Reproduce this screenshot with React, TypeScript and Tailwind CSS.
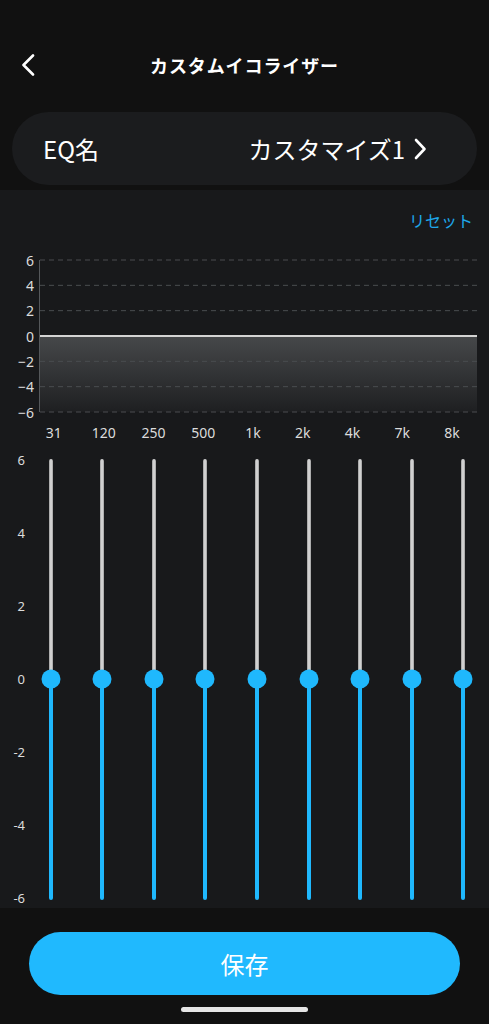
import React from 'react';

const FREQS = ['31', '120', '250', '500', '1k', '2k', '4k', '7k', '8k'];
const CHART_TICKS = [6, 4, 2, 0, -2, -4, -6];
const SLIDER_TICKS = ['6', '4', '2', '0', '-2', '-4', '-6'];

// y position of a gain value inside the preview chart (25.33px per 2dB)
const chartY = (v: number) => 10 + (6 - v) * 12.667;

function PreviewChart() {
  return (
    <svg width="489" height="175" viewBox="0 0 489 175" className="block">
      <defs>
        <linearGradient id="fill" x1="0" y1="0" x2="0" y2="1">
          <stop offset="0" stopColor="#46484a" />
          <stop offset="1" stopColor="#1e1f21" />
        </linearGradient>
      </defs>
      <rect x="40" y={chartY(0)} width="437" height={chartY(-6) - chartY(0)} fill="url(#fill)" />
      {CHART_TICKS.filter((t) => t !== 0).map((t) => (
        <line
          key={t}
          x1="40"
          x2="477"
          y1={chartY(t)}
          y2={chartY(t)}
          stroke="#4a4d50"
          strokeWidth="1"
          strokeDasharray="5 4"
        />
      ))}
      <line x1="39.5" x2="39.5" y1={chartY(6)} y2={chartY(-6)} stroke="#55585b" strokeWidth="1" />
      <line x1="40" x2="477" y1={chartY(0)} y2={chartY(0)} stroke="#d4d4d4" strokeWidth="2.2" />
      {CHART_TICKS.map((t) => (
        <text
          key={t}
          x="34"
          y={chartY(t)}
          textAnchor="end"
          dominantBaseline="central"
          fontSize="14"
          fill="#dcdcdc"
          fontFamily='"Noto Sans", sans-serif'
        >
          {t < 0 ? `\u2212${-t}` : t}
        </text>
      ))}
    </svg>
  );
}

function Slider() {
  return (
    <div className="flex justify-center">
      <div className="relative mt-[8px] flex h-[441px] w-[4px] flex-col">
        <div className="h-[220px] rounded-t-full bg-gradient-to-r from-[#9c9c9c] via-[#e2e2e2] to-[#9c9c9c]" />
        <div className="flex-1 rounded-b-full bg-[#1fb8fd]" />
        <div className="absolute left-1/2 top-[220px] h-[19px] w-[19px] -translate-x-1/2 -translate-y-1/2 rounded-full bg-[#1fb8fd]" />
      </div>
    </div>
  );
}

export default function App() {
  return (
    <div
      className="flex h-[1024px] w-[489px] flex-col bg-[#111111] text-white"
      style={{ fontFamily: '"Noto Sans CJK JP", "Noto Sans", sans-serif' }}
    >
      {/* Nav bar */}
      <div className="relative mt-[43px] flex h-[44px] items-center justify-center">
        <svg className="absolute left-[18px] top-[11px]" width="22" height="22" viewBox="0 0 22 22">
          <polyline points="15,1.5 5.5,11 15,20.5" fill="none" stroke="#ffffff" strokeWidth="2.6" strokeLinecap="round" strokeLinejoin="round" />
        </svg>
        <h1 className="text-[18px] font-bold tracking-[0.05em]">カスタムイコライザー</h1>
      </div>

      {/* EQ name */}
      <div className="mx-[12px] mt-[25px] flex h-[73px] items-center justify-between rounded-full bg-[#1b1c1e] pl-[31px] pr-[50px]">
        <span className="text-[24px] leading-none">EQ名</span>
        <div className="flex items-center gap-[8px]">
          <span className="text-[24px] leading-none">カスタマイズ1</span>
          <svg width="14" height="22" viewBox="0 0 14 22">
            <polyline points="3,2 11.5,11 3,20" fill="none" stroke="#ffffff" strokeWidth="2.6" strokeLinecap="round" strokeLinejoin="round" />
          </svg>
        </div>
      </div>

      {/* EQ panel */}
      <div className="mt-[5px] flex flex-col bg-[#18191b] pb-[1px]">
        <div className="flex h-[60px] items-center justify-end pr-[16px]">
          <span className="text-[16px] text-[#1ea8ea]">リセット</span>
        </div>

        <PreviewChart />

        <div className="ml-[29px] mr-[12px] -mt-[2px] grid h-[20px] grid-cols-9 items-center text-center text-[14px] leading-[20px] text-[#dcdcdc]">
          {FREQS.map((f) => (
            <span key={f} style={{ fontFamily: '"Noto Sans", sans-serif' }}>{f}</span>
          ))}
        </div>

        <div className="mt-[8px] flex h-[456px]">
          <div
            className="flex w-[25px] flex-col justify-between text-right text-[13px] leading-[18px] text-[#dcdcdc]"
            style={{ fontFamily: '"Noto Sans", sans-serif' }}
          >
            {SLIDER_TICKS.map((t) => (
              <span key={t}>{t}</span>
            ))}
          </div>
          <div className="grid flex-1 grid-cols-9">
            {FREQS.map((f) => (
              <Slider key={f} />
            ))}
          </div>
        </div>
      </div>

      {/* Save */}
      <button className="mx-[29px] mt-[24px] h-[63px] rounded-full bg-[#20b9fe] text-[24px] text-white">
        保存
      </button>
      <div className="mx-auto mt-[12px] h-[5px] w-[127px] rounded-full bg-[#e6e6e6]" />
    </div>
  );
}
